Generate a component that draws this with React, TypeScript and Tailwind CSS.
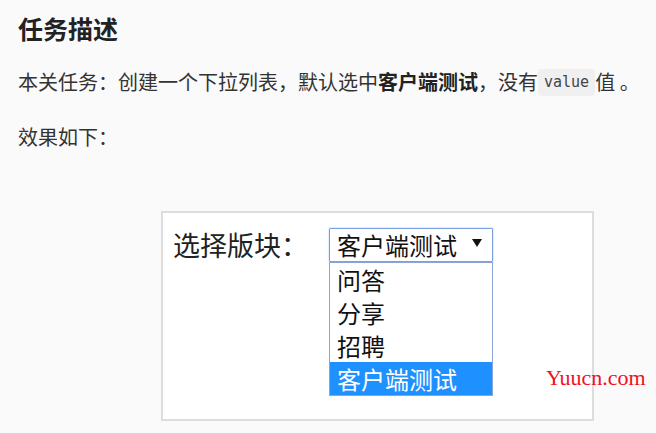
import React from "react";

const cjk = { fontFamily: '"Noto Sans CJK SC", "Noto Sans", sans-serif' };

export default function App() {
  return (
    <div className="relative w-[656px] h-[433px] overflow-hidden bg-[#fafafa] text-[#333]" style={cjk}>
      <div className="pl-[18px] pt-[10px]">
        <h1 className="text-[25px] leading-[36px] font-bold text-[#222]">任务描述</h1>
        <p className="mt-[22px] text-[20px] leading-[28px] whitespace-nowrap flex items-center">
          <span>本关任务：创建一个下拉列表，默认选中</span>
          <b className="font-bold text-[#222]">客户端测试</b>
          <span>，没有</span>
          <code
            className="inline-flex items-center h-[27px] px-[6px] rounded-[4px] bg-[#f0f0f0] text-[15px] text-[#444]"
            style={{ fontFamily: '"DejaVu Sans Mono", monospace' }}
          >
            value
          </code>
          <span>值 。</span>
        </p>
        <p className="mt-[27px] text-[20px] leading-[28px]">效果如下：</p>
        <div className="mt-[60px] ml-[143px] w-[433px] h-[210px] border-2 border-[#dddddd] bg-white flex items-start pt-[15px] pl-[10px] gap-[21px]">
          <div className="text-[27px] leading-[34px] text-[#222] w-[135px]">选择版块：</div>
          <div className="flex flex-col w-[164px]">
            <div className="h-[34px] border-[1.5px] border-[#7ba0e2] shadow-[0_0_2px_#9fbdf0] rounded-[1px] flex items-center justify-between pl-[7px] pr-[10px] text-[24px] leading-[30px] text-[#111]">
              <span>客户端测试</span>
              <svg width="10" height="8" viewBox="0 0 10 8" className="mb-[4px]">
                <polygon points="0,0 10,0 5,8" fill="#111" />
              </svg>
            </div>
            <div className="border border-[#8aa6d8] text-[24px] leading-[33px] text-[#111]">
              <div className="h-[33px] pl-[7px]">问答</div>
              <div className="h-[33px] pl-[7px]">分享</div>
              <div className="h-[33px] pl-[7px]">招聘</div>
              <div className="h-[33px] pl-[7px] bg-[#1e90ff] text-white">客户端测试</div>
            </div>
          </div>
        </div>
      </div>
      <div
        className="absolute left-[546px] top-[364px] text-[22px] leading-[28px] text-[#ee1122]"
        style={{ fontFamily: '"Liberation Serif", serif' }}
      >
        Yuucn.com
      </div>
    </div>
  );
}
